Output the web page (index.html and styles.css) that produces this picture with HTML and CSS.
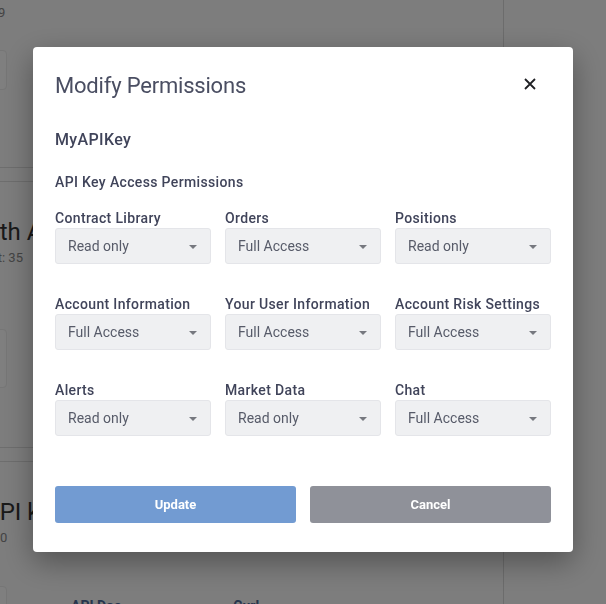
FILE: index.html
```html
<!DOCTYPE html>
<html lang="en">
<head>
    <meta charset="UTF-8">
    <meta name="viewport" content="width=device-width, initial-scale=1.0">
    <title>API Keys</title>
    <link rel="stylesheet" href="styles.css">
</head>
<body>
    <!-- page behind the dialog -->
    <div class="page">
        <div class="main">
            <div class="section first">
                <p class="section-sub year">2019</p>
                <div class="section-box"></div>
            </div>
            <div class="divider"></div>
            <div class="section">
                <h2 class="section-title auth">Auth Apps</h2>
                <p class="section-sub count">Limit: 35</p>
                <div class="section-box tall"></div>
            </div>
            <div class="divider"></div>
            <div class="section">
                <h2 class="section-title keys">API keys</h2>
                <p class="section-sub zero">0</p>
                <div class="section-row">
                    <div class="section-box small"></div>
                    <span class="tab">API Doc</span>
                    <span class="tab">Curl</span>
                </div>
            </div>
        </div>
        <div class="side"></div>
    </div>

    <div class="overlay">
        <div class="modal">
            <div class="modal-header">
                <h1>Modify Permissions</h1>
                <button class="close-btn" aria-label="Close">
                    <svg width="12" height="12" viewBox="0 0 12 12">
                        <path d="M1 1 L11 11 M11 1 L1 11" stroke="#1f2024" stroke-width="1.8" fill="none"/>
                    </svg>
                </button>
            </div>

            <div class="key-name">MyAPIKey</div>
            <div class="perm-title">API Key Access Permissions</div>

            <div class="perm-grid">
                <div class="field">
                    <label>Contract Library</label>
                    <div class="select"><span>Read only</span></div>
                </div>
                <div class="field">
                    <label>Orders</label>
                    <div class="select"><span>Full Access</span></div>
                </div>
                <div class="field">
                    <label>Positions</label>
                    <div class="select"><span>Read only</span></div>
                </div>
                <div class="field">
                    <label>Account Information</label>
                    <div class="select"><span>Full Access</span></div>
                </div>
                <div class="field">
                    <label>Your User Information</label>
                    <div class="select"><span>Full Access</span></div>
                </div>
                <div class="field">
                    <label>Account Risk Settings</label>
                    <div class="select"><span>Full Access</span></div>
                </div>
                <div class="field">
                    <label>Alerts</label>
                    <div class="select"><span>Read only</span></div>
                </div>
                <div class="field">
                    <label>Market Data</label>
                    <div class="select"><span>Read only</span></div>
                </div>
                <div class="field">
                    <label>Chat</label>
                    <div class="select"><span>Full Access</span></div>
                </div>
            </div>

            <div class="modal-actions">
                <button class="btn btn-update">Update</button>
                <button class="btn btn-cancel">Cancel</button>
            </div>
        </div>
    </div>
</body>
</html>
```

FILE: styles.css
```css
body {
    margin: 0;
    padding: 0;
    font-family: Roboto, "Liberation Sans", Arial, sans-serif;
    background-color: #fafafa;
    overflow: hidden;
    height: 604px;
}

/* background page */
.page {
    display: flex;
    height: 604px;
    overflow: hidden;
}
.main {
    width: 503px;
    flex-shrink: 0;
    border-right: 1px solid #d8d8d8;
    overflow: hidden;
}
.side {
    flex: 1;
}
.section {
    height: 265px;
    padding-top: 35px;
    box-sizing: border-box;
}
.section.first {
    height: 167px;
    padding-top: 2px;
}
.section-title {
    margin: 0;
    font-size: 24px;
    font-weight: 400;
    color: #333;
    line-height: 30px;
    white-space: nowrap;
}
.section-title.auth {
    margin-left: -29px;
}
.section-title.keys {
    margin-left: -16px;
}
.section-sub {
    margin: 2px 0 0;
    font-size: 13px;
    color: #888;
    line-height: 18px;
    white-space: nowrap;
}
.section-sub.year {
    margin-left: -24px;
}
.section-sub.count {
    margin-left: -27px;
}
.section-box {
    width: 22px;
    height: 38px;
    margin-top: 28px;
    margin-left: -17px;
    background-color: #fff;
    border: 1px solid #ececec;
    border-radius: 4px;
}
.section-box.tall {
    height: 57px;
    margin-top: 62px;
}
.section-row {
    display: flex;
    align-items: flex-start;
    margin-top: 39px;
}
.section-box.small {
    margin-top: 0;
    height: 40px;
}
.tab {
    margin-top: 12px;
    margin-left: 64px;
    font-size: 14px;
    font-weight: 700;
    color: #4e6a9a;
}
.tab + .tab {
    margin-left: 112px;
}
.divider {
    height: 13px;
    border-top: 1px solid #dcdcdc;
    border-bottom: 1px solid #dcdcdc;
}

/* dialog */
.overlay {
    position: fixed;
    top: 0;
    left: 0;
    right: 0;
    bottom: 0;
    background-color: rgba(0, 0, 0, 0.5);
    display: flex;
    justify-content: center;
    align-items: flex-start;
    padding-top: 47px;
}
.modal {
    width: 540px;
    box-sizing: border-box;
    background-color: #fff;
    border-radius: 4px;
    padding: 23px 22px 29px;
    box-shadow: 0 10px 30px rgba(0, 0, 0, 0.35);
}
.modal-header {
    display: flex;
    justify-content: space-between;
    align-items: center;
}
.modal-header h1 {
    margin: 0;
    font-size: 22px;
    font-weight: 400;
    line-height: 32px;
    letter-spacing: -0.2px;
    color: #4a4e62;
}
.close-btn {
    background: none;
    border: none;
    padding: 0;
    margin-right: 15px;
    margin-top: -4px;
    width: 12px;
    height: 12px;
    cursor: pointer;
    display: flex;
}
.key-name {
    margin-top: 28px;
    font-size: 16px;
    font-weight: 500;
    line-height: 20px;
    letter-spacing: 0.35px;
    color: #40445a;
}
.perm-title {
    margin-top: 22px;
    font-size: 14px;
    font-weight: 500;
    line-height: 20px;
    letter-spacing: 0.35px;
    color: #40445a;
}
.perm-grid {
    margin-top: 16px;
    display: grid;
    grid-template-columns: repeat(3, 156px);
    column-gap: 14px;
    row-gap: 30px;
}
.field label {
    display: block;
    font-size: 14px;
    font-weight: 500;
    line-height: 20px;
    letter-spacing: 0.35px;
    color: #40445a;
    white-space: nowrap;
}
.select {
    position: relative;
    height: 36px;
    box-sizing: border-box;
    background-color: #eff0f2;
    border: 1px solid #e4e5e9;
    border-radius: 3px;
    padding-left: 12px;
    display: flex;
    align-items: center;
    font-size: 14px;
    color: #575b69;
}
.select::after {
    content: "";
    position: absolute;
    right: 13px;
    top: 16px;
    border-left: 4px solid transparent;
    border-right: 4px solid transparent;
    border-top: 4px solid #76787f;
}
.modal-actions {
    margin-top: 50px;
    display: flex;
    gap: 14px;
}
.btn {
    flex: 1;
    height: 37px;
    border: none;
    border-radius: 3px;
    font-family: Roboto, "Liberation Sans", Arial, sans-serif;
    font-size: 13px;
    font-weight: 700;
    color: #fff;
    cursor: pointer;
}
.btn-update {
    background-color: #729bd2;
}
.btn-cancel {
    background-color: #8f9199;
}
```
